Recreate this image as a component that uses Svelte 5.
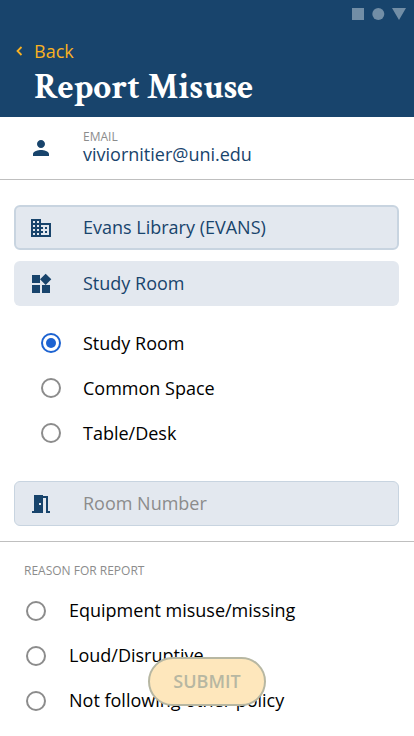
<script>
  const places = ['Study Room', 'Common Space', 'Table/Desk'];
  const reasons = ['Equipment misuse/missing', 'Loud/Disruptive', 'Not following other policy'];
  let place = $state('Study Room');
  let reason = $state('');
</script>

{#snippet radio(on)}
  <svg class="radio" class:on viewBox="0 0 20 20">
    <circle cx="10" cy="10" r="9" fill="none" stroke="currentColor" stroke-width="2" />
    {#if on}<circle cx="10" cy="10" r="5" fill="currentColor" />{/if}
  </svg>
{/snippet}

<div class="screen">
  <header>
    <svg class="status" width="54" height="12" viewBox="0 0 54 12">
      <path d="M0 0h12v12H0zM40 0h14l-7 12z" />
      <circle cx="26.3" cy="6" r="6" />
    </svg>
    <div class="back">
      <svg width="7" height="10" viewBox="0 0 7 10"><path d="M5.5 1 1.5 5l4 4" /></svg>
      <span>Back</span>
    </div>
    <h1>Report Misuse</h1>
  </header>

  <section class="email">
    <svg class="icon" viewBox="0 0 24 24"><path d="M12 12c2.21 0 4-1.79 4-4s-1.79-4-4-4-4 1.79-4 4 1.79 4 4 4zm0 2c-2.67 0-8 1.34-8 4v2h16v-2c0-2.66-5.33-4-8-4z" /></svg>
    <div>
      <div class="label">EMAIL</div>
      <div class="address">viviornitier@uni.edu</div>
    </div>
  </section>

  <section class="location">
    <div class="field thick">
      <svg class="icon" viewBox="0 0 24 24"><path d="M12 7V3H2v18h20V7H12zM6 19H4v-2h2v2zm0-4H4v-2h2v2zm0-4H4V9h2v2zm0-4H4V5h2v2zm4 12H8v-2h2v2zm0-4H8v-2h2v2zm0-4H8V9h2v2zm0-4H8V5h2v2zm10 12h-8v-2h2v-2h-2v-2h2v-2h-2V9h8v10zm-2-8h-2v2h2v-2zm0 4h-2v2h2v-2z" /></svg>
      <span>Evans Library (EVANS)</span>
    </div>
    <div class="field">
      <svg class="icon" viewBox="0 0 24 24"><path d="M13 13v8h8v-8h-8zM3 21h8v-8H3v8zM3 3v8h8V3H3zm13.66-1.31L11 7.34 16.66 13l5.66-5.66-5.66-5.65z" /></svg>
      <span>Study Room</span>
    </div>
    <div class="places">
      {#each places as p}
        <div class="option" role="radio" tabindex="-1" aria-checked={place === p} onclick={() => (place = p)} onkeydown={() => (place = p)}>
          {@render radio(place === p)}
          <span>{p}</span>
        </div>
      {/each}
    </div>
    <div class="field thin">
      <svg class="icon" viewBox="0 0 24 24"><path d="M14 6v15H3v-2h2V3h9v1h5v15h2v2h-4V6h-3zm-4 5v2h2v-2h-2z" /></svg>
      <span>Room Number</span>
    </div>
  </section>

  <section class="reasons">
    <div class="label">REASON FOR REPORT</div>
    {#each reasons as r}
      <div class="option" role="radio" tabindex="-1" aria-checked={reason === r} onclick={() => (reason = r)} onkeydown={() => (reason = r)}>
        {@render radio(reason === r)}
        <span>{r}</span>
      </div>
    {/each}
  </section>

  <button class="submit">SUBMIT</button>
</div>

<style>
  .screen {
    position: relative;
    width: 414px;
    height: 736px;
    overflow: hidden;
    box-sizing: border-box;
    background: #fff;
    color: #000;
    font: 18px/24px 'Open Sans', 'Noto Sans', sans-serif;
  }
  .screen * { box-sizing: border-box; }
  svg { display: block; flex: none; }
  header {
    height: 117px;
    padding-top: 8px;
    background: #18446c;
    display: flex;
    flex-direction: column;
  }
  .status { align-self: flex-end; margin-right: 8.5px; fill: #728ea6; }
  .back { display: flex; align-items: center; height: 24px; margin-top: 19px; padding-left: 15.5px; color: #f9b122; }
  .back svg { margin-right: 11.5px; margin-top: -1px; fill: none; stroke: currentColor; stroke-width: 1.8; }
  h1 {
    margin: 4px 0 0 34.3px;
    font: bold 35.3px/40px 'Crimson Text', 'Liberation Serif', serif;
    color: #fff;
    white-space: nowrap;
  }
  .icon { width: 24px; height: 24px; fill: #18446c; }
  .label { font-size: 12px; line-height: 16px; color: #8c8c8c; }
  .email {
    display: flex;
    height: 63px;
    padding: 12px 0 0 29px;
    border-bottom: 1px solid #bfbfbf;
    color: #18446c;
  }
  .email .icon { margin: 7px 30px 0 0; }
  .address { line-height: 18px; }
  .location {
    height: 362px;
    padding: 25px 15px 0 14px;
    border-bottom: 1px solid #bfbfbf;
  }
  .field {
    display: flex;
    align-items: center;
    gap: 30px;
    height: 45px;
    padding-left: 15px;
    border-radius: 6px;
    background: #e3e8ef;
    color: #18446c;
  }
  .field span, .reasons span { padding-bottom: 2px; }
  .thick { border: 2px solid #c8d4e0; padding-left: 13px; margin-bottom: 11px; }
  .thin { border: 1px solid #c8d4e0; padding-left: 14px; color: #8c8c8c; }
  .places { height: 175px; padding: 14px 0 0 27px; }
  .option { display: flex; align-items: center; gap: 22px; height: 45px; }
  .radio { width: 20px; height: 20px; color: #8c8c8c; }
  .radio.on { color: #1d63d1; }
  .reasons { padding: 21px 0 0 26px; }
  .reasons .label { margin: 0 0 9px -2px; }
  .reasons .option { gap: 23px; }
  .submit {
    position: absolute;
    left: 148px;
    top: 657px;
    width: 118px;
    height: 49px;
    padding: 0 0 2px;
    border: 2px solid #b7b7a2;
    border-radius: 25px;
    background: #fee7bc;
    color: #b7b7a2;
    font: 600 18px/24px 'Open Sans', 'Noto Sans', sans-serif;
  }
</style>
